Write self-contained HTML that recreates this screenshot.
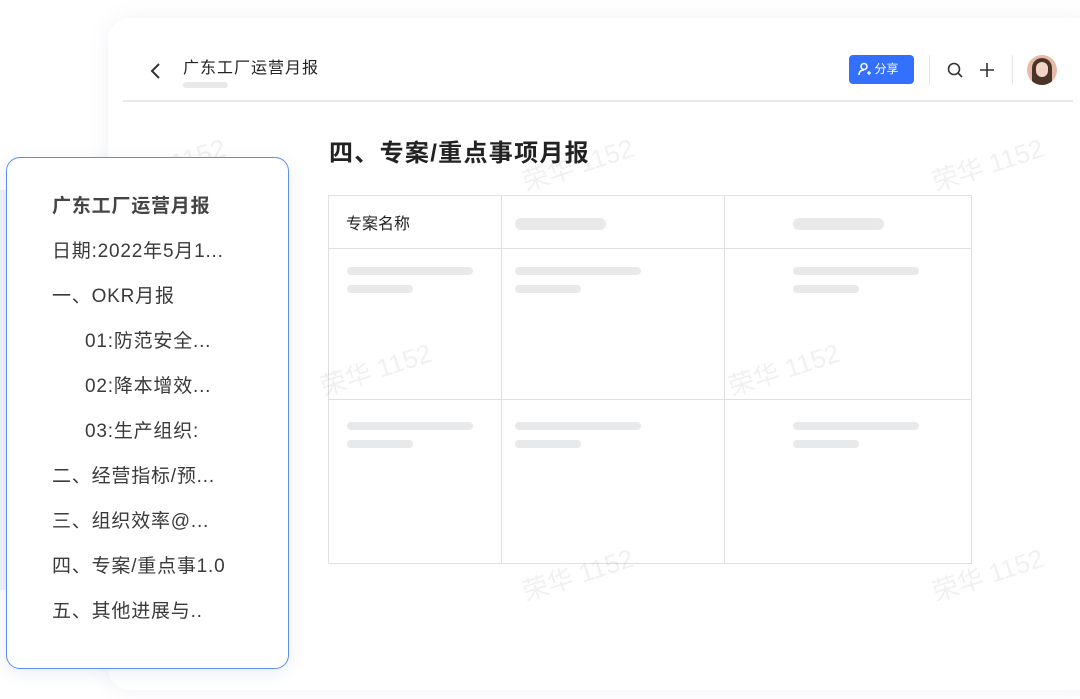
<html><head><style>
body{margin:0;width:1080px;height:699px;background:#fff;position:relative;overflow:hidden;font-family:"Liberation Sans","Noto Sans CJK SC",sans-serif;}
.card{position:absolute;left:108px;top:18px;width:990px;height:672px;border-radius:22px;background:#fff;box-shadow:0 0 20px rgba(120,140,180,0.12);}
.bgl{position:absolute;left:0;top:190px;width:110px;height:400px;background:linear-gradient(90deg,#eef2fa,#fff);}
.hdr{position:absolute;left:123px;top:100px;width:950px;height:2px;background:#e8e9eb;}
.wm{position:absolute;color:rgba(0,0,0,0.06);font-size:26px;transform:rotate(-18deg);white-space:nowrap;}
.sk{position:absolute;height:8px;border-radius:4px;background:#e8e9eb;}
.toc{position:absolute;left:6px;top:157px;width:281px;height:510px;border:1.5px solid #5b8ef0;border-radius:14px;background:#fff;box-shadow:0 4px 16px rgba(80,110,180,0.12);}
.toc div{position:absolute;font-size:19px;letter-spacing:0.8px;color:#3a3a3a;white-space:nowrap;}
td{border:1px solid #dfe0e2;position:relative;padding:0;}
</style></head><body>
<div class="bgl"></div>
<div class="card"></div>
<svg style="position:absolute;left:148px;top:62px" width="14" height="18"><path d="M11 2 L4 9 L11 16" stroke="#333" stroke-width="2" fill="none"/></svg>
<div style="position:absolute;left:183px;top:54px;font-size:16px;letter-spacing:1px;color:#222">广东工厂运营月报</div>
<div class="sk" style="left:183px;top:82px;width:45px;height:6px"></div>
<div style="position:absolute;left:849px;top:55px;width:65px;height:29px;background:#3370ff;border-radius:4px;color:#fff;font-size:12px;line-height:29px;text-align:center">&nbsp;&nbsp;&nbsp;分享</div>
<svg style="position:absolute;left:858px;top:62px" width="14" height="14"><circle cx="6" cy="4.5" r="3" stroke="#fff" stroke-width="1.5" fill="none"/><path d="M1 13 Q1 8 6 8" stroke="#fff" stroke-width="1.5" fill="none"/><path d="M9 11h4M11 9v4" stroke="#fff" stroke-width="1.3"/></svg>
<div style="position:absolute;left:929px;top:55px;width:1px;height:30px;background:#e5e6e8"></div>
<svg style="position:absolute;left:946px;top:61px" width="18" height="18"><circle cx="8" cy="8" r="5.5" stroke="#333" stroke-width="1.6" fill="none"/><path d="M12 12l4 4" stroke="#333" stroke-width="1.6"/></svg>
<svg style="position:absolute;left:978px;top:61px" width="18" height="18"><path d="M9 2v14M2 9h14" stroke="#333" stroke-width="1.6"/></svg>
<div style="position:absolute;left:1012px;top:55px;width:1px;height:30px;background:#e5e6e8"></div>
<div style="position:absolute;left:1027px;top:55px;width:30px;height:30px;border-radius:50%;background:#e8b9a8;overflow:hidden"><div style="position:absolute;left:5px;top:3px;width:20px;height:27px;border-radius:10px 10px 4px 4px;background:#4a3328"></div><div style="position:absolute;left:9px;top:7px;width:12px;height:15px;border-radius:6px;background:#f3d4c4"></div></div>
<div class="hdr"></div>
<div style="position:absolute;left:329px;top:133px;font-size:24px;letter-spacing:1.3px;font-weight:bold;color:#222">四、专案/重点事项月报</div>
<table style="position:absolute;left:328px;top:195px;border-collapse:collapse;table-layout:fixed;width:643px;height:369px">
<colgroup><col style="width:173px"><col style="width:223px"><col style="width:247px"></colgroup>
<tr style="height:53px"><td style="font-size:16px;color:#222;padding-left:17px">专案名称</td><td><div class="sk" style="left:13px;top:22px;width:91px;height:12px;border-radius:6px"></div></td><td><div class="sk" style="left:68px;top:22px;width:91px;height:12px;border-radius:6px"></div></td></tr>
<tr style="height:151px"><td><div class="sk" style="left:18px;top:18px;width:126px"></div><div class="sk" style="left:18px;top:36px;width:66px"></div></td><td><div class="sk" style="left:13px;top:18px;width:126px"></div><div class="sk" style="left:13px;top:36px;width:66px"></div></td><td><div class="sk" style="left:68px;top:18px;width:126px"></div><div class="sk" style="left:68px;top:36px;width:66px"></div></td></tr>
<tr><td><div class="sk" style="left:18px;top:22px;width:126px"></div><div class="sk" style="left:18px;top:40px;width:66px"></div></td><td><div class="sk" style="left:13px;top:22px;width:126px"></div><div class="sk" style="left:13px;top:40px;width:66px"></div></td><td><div class="sk" style="left:68px;top:22px;width:126px"></div><div class="sk" style="left:68px;top:40px;width:66px"></div></td></tr>
</table>
<div class="wm" style="left:112px;top:145px">荣华 1152</div>
<div class="wm" style="left:520px;top:145px">荣华 1152</div>
<div class="wm" style="left:930px;top:145px">荣华 1152</div>
<div class="wm" style="left:318px;top:350px">荣华 1152</div>
<div class="wm" style="left:726px;top:350px">荣华 1152</div>
<div class="wm" style="left:520px;top:555px">荣华 1152</div>
<div class="wm" style="left:930px;top:555px">荣华 1152</div>
<div class="toc">
<div style="left:45px;top:33px;font-weight:bold;color:#444">广东工厂运营月报</div>
<div style="left:45px;top:78px">日期:2022年5月1...</div>
<div style="left:45px;top:123px">一、OKR月报</div>
<div style="left:78px;top:168px">01:防范安全...</div>
<div style="left:78px;top:213px">02:降本增效...</div>
<div style="left:78px;top:258px">03:生产组织:</div>
<div style="left:45px;top:303px">二、经营指标/预...</div>
<div style="left:45px;top:348px">三、组织效率@...</div>
<div style="left:45px;top:393px">四、专案/重点事1.0</div>
<div style="left:45px;top:438px">五、其他进展与..</div>
</div>
</body></html>
